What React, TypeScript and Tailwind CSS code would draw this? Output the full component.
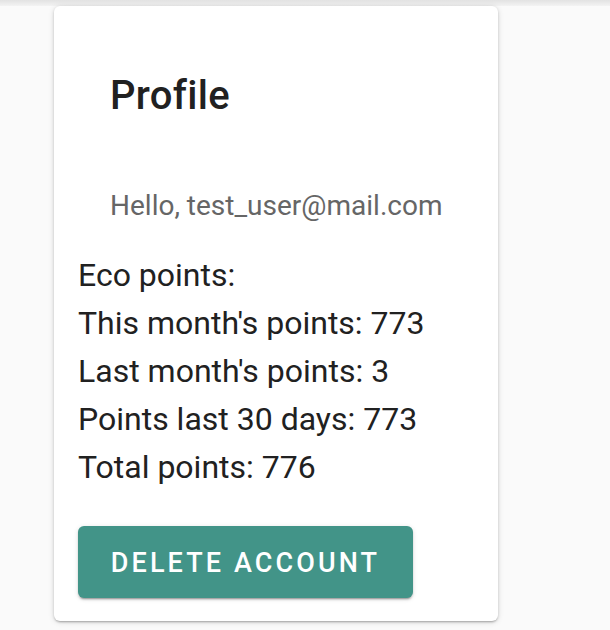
import React from "react";

export default function App() {
  return (
    <div className="min-h-[630px] w-[610px] bg-[#fafafa] font-['Roboto',sans-serif]">
      <div className="h-[6px] bg-gradient-to-b from-[#e2e2e2] to-[#f3f3f3]" />
      <div className="pl-[54px]">
        <div className="w-[444px] h-[615px] bg-white rounded-[6px] shadow-[0_2px_2px_-1px_rgba(0,0,0,0.2),0_1px_3px_0_rgba(0,0,0,0.14),0_1px_6px_0_rgba(0,0,0,0.12)] px-[24px]">
          <h1 className="pl-[32px] pt-[68px] text-[40px] leading-[44px] font-medium text-[#212121] tracking-[0.3px]">
            Profile
          </h1>
          <p className="pl-[32px] mt-[70px] text-[28px] leading-[36px] text-[#666666]">
            Hello, test_user@mail.com
          </p>
          <div className="mt-[27px] text-[32px] leading-[48px] text-[#212121]">
            <div>Eco points:</div>
            <div>This month's points: 773</div>
            <div>Last month's points: 3</div>
            <div>Points last 30 days: 773</div>
            <div>Total points: 776</div>
          </div>
          <button className="mt-[35px] w-[335px] h-[72px] rounded-[6px] bg-[#429488] text-white text-[27px] font-medium tracking-[3.1px] uppercase pt-[2px] shadow-[0_3px_1px_-2px_rgba(0,0,0,0.2),0_2px_2px_0_rgba(0,0,0,0.14),0_1px_5px_0_rgba(0,0,0,0.12)]">
            Delete Account
          </button>
        </div>
      </div>
    </div>
  );
}
